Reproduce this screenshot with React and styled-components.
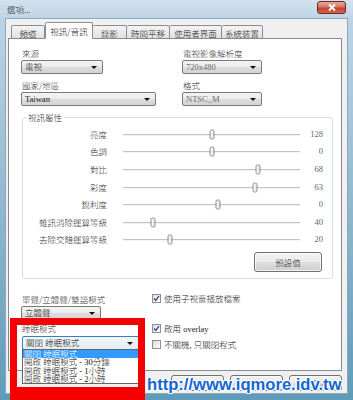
import React from "react";
import styled, { createGlobalStyle } from "styled-components";

const GlobalStyle = createGlobalStyle`
  html, body {
    margin: 0;
    padding: 0;
  }
  body {
    width: 353px;
    height: 400px;
    overflow: hidden;
    font-family: "Liberation Serif", "Noto Sans CJK TC", serif;
    font-size: 8.5px;
    font-weight: 300;
    color: #1b1b1b;
  }
`;

const Window = styled.div`
  position: relative;
  width: 353px;
  height: 400px;
  box-sizing: border-box;
  display: flex;
  flex-direction: column;
  padding: 0 6px 7px;
  overflow: hidden;
  background: linear-gradient(180deg, #d3e3ef 0px, #bdd4e5 19px, #92b9d0 200px, #5e9bb8 400px);
`;

const TitleBar = styled.div`
  height: 19px;
  display: flex;
  align-items: flex-start;
  justify-content: space-between;
`;

const Title = styled.span`
  margin: 4px 0 0 1px;
  line-height: 10px;
  font-family: "Noto Sans CJK TC", sans-serif;
  font-size: 8.5px;
  color: #222;
`;

const CloseButton = styled.div`
  width: 29px;
  height: 13px;
  margin: 1px 1px 0 0;
  box-sizing: border-box;
  border: 1px solid #6d2a22;
  border-radius: 3px;
  background: linear-gradient(180deg, #e9a99a 0%, #d47463 48%, #c2402c 52%, #d5644d 100%);
  display: flex;
  align-items: center;
  justify-content: center;
`;

const Client = styled.div`
  flex: 1;
  display: flex;
  flex-direction: column;
  padding: 3px 5px 2px 2px;
  background: #f0f0f0;
  box-shadow: 0 0 0 1px #8aa9be;
`;

const TabStrip = styled.div`
  height: 17px;
  display: flex;
  align-items: flex-end;
  padding-left: 3px;
  margin-bottom: -1px;
  position: relative;
  z-index: 1;
`;

const Tab = styled.div`
  width: ${(p) => p.$w}px;
  height: ${(p) => (p.$active ? 17 : 14)}px;
  box-sizing: border-box;
  display: flex;
  align-items: center;
  justify-content: center;
  border: 1px solid #898c95;
  border-left-width: ${(p) => (p.$first || p.$active ? 1 : 0)}px;
  border-bottom-color: ${(p) => (p.$active ? "#fff" : "#898c95")};
  border-radius: 2px 2px 0 0;
  background: ${(p) => (p.$active ? "#fff" : "linear-gradient(180deg, #f4f4f4, #e1e1e1)")};
  font-family: "Noto Sans CJK TC", sans-serif;
  font-size: 8.5px;
  line-height: 10px;
  padding-top: ${(p) => (p.$active ? 0 : 1)}px;
`;

const Panel = styled.div`
  flex: 1;
  background: #fff;
  border: 1px solid #898c95;
  padding: 8px 8px 0 12px;
  display: flex;
  flex-direction: column;
`;

const TopGrid = styled.div`
  display: grid;
  grid-template-columns: 161px 1fr;
`;

const Column = styled.div`
  display: flex;
  flex-direction: column;
`;

const Label = styled.div`
  height: 12px;
  line-height: 12px;
  margin-top: ${(p) => p.$mt || 0}px;
  margin-bottom: ${(p) => (p.$mb === undefined ? 1 : p.$mb)}px;
  margin-left: 1px;
  font-family: "Noto Sans CJK TC", sans-serif;
  color: #333;
`;

const SelectBox = styled.div`
  position: relative;
  width: ${(p) => p.$w}px;
  height: 14px;
  box-sizing: border-box;
  display: flex;
  align-items: center;
  padding-left: 3px;
  border: 1px solid ${(p) => (p.$open ? "#3c7fb1" : "#7a7a7a")};
  border-radius: 2px;
  background: ${(p) =>
    p.$open
      ? "linear-gradient(180deg, #f3f7fa, #e3ecf3)"
      : "linear-gradient(180deg, #f4f4f4 0%, #ebebeb 50%, #dedede 50%, #d3d3d3 100%)"};
  color: ${(p) => (p.$dim ? "#6a6a6a" : "#111")};
  line-height: 12px;
  margin-left: ${(p) => p.$ml || 0}px;
`;

const Arrow = styled.span`
  position: absolute;
  right: 5px;
  top: 5px;
  width: 0;
  height: 0;
  border-left: 3px solid transparent;
  border-right: 3px solid transparent;
  border-top: 3px solid #111;
`;

const DropList = styled.div`
  position: absolute;
  top: 100%;
  left: -1px;
  right: -1px;
  z-index: 3;
  box-sizing: border-box;
  background: #fff;
  border: 1px solid #646464;
  display: flex;
  flex-direction: column;
`;

const DropItem = styled.div`
  height: 8.3px;
  line-height: 8.3px;
  padding-left: 1px;
  white-space: nowrap;
  font-size: 8.5px;
  background: ${(p) => (p.$hl ? "#3399ff" : "transparent")};
  color: ${(p) => (p.$hl ? "#fff" : "#111")};
`;

const GroupBox = styled.fieldset`
  margin: 6px 0 0 1px;
  padding: 3px 10px 6px 0;
  border: 1px solid #d5dfe5;
  border-radius: 3px;
  min-width: 0;
`;

const Legend = styled.legend`
  margin-left: 3px;
  padding: 0 2px;
  line-height: 10px;
  font-family: "Noto Sans CJK TC", sans-serif;
  font-size: 8.5px;
  color: #333;
`;

const SliderGrid = styled.div`
  display: grid;
  grid-template-columns: 100px 177px 23px;
  grid-auto-rows: 17.6px;
  align-items: center;
`;

const SliderLabel = styled.div`
  text-align: right;
  padding-right: 16px;
  font-family: "Noto Sans CJK TC", sans-serif;
  color: #333;
  line-height: 10px;
`;

const Track = styled.div`
  position: relative;
  height: 100%;
  &::before {
    content: "";
    position: absolute;
    left: 0;
    right: 0;
    top: 50%;
    height: 1px;
    background: #c4c4c4;
    border-bottom: 1px solid #f4f4f4;
  }
`;

const Thumb = styled.span`
  position: absolute;
  top: 50%;
  width: 5px;
  height: 10px;
  box-sizing: border-box;
  transform: translate(-50%, -45%);
  border: 1px solid #8a8a8a;
  border-radius: 2px;
  background: linear-gradient(90deg, #fdfdfd, #e4e4e4);
`;

const Value = styled.div`
  text-align: right;
  color: #666;
  line-height: 10px;
`;

const ButtonRow = styled.div`
  display: flex;
  justify-content: flex-end;
  margin-top: ${(p) => p.$mt || 0}px;
  gap: 6px;
`;

const Button = styled.div`
  width: ${(p) => p.$w}px;
  height: ${(p) => p.$h}px;
  box-sizing: border-box;
  display: flex;
  align-items: center;
  justify-content: center;
  border: 1px solid #707070;
  border-radius: 3px;
  background: linear-gradient(180deg, #f2f2f2 0%, #ebebeb 50%, #dddddd 50%, #cfcfcf 100%);
  box-shadow: inset 0 0 0 1px rgba(255, 255, 255, 0.7);
  font-family: "Noto Sans CJK TC", sans-serif;
  color: #222;
  line-height: 10px;
`;

const BottomGrid = styled.div`
  display: grid;
  grid-template-columns: 131px 1fr;
  margin-top: 14px;
`;

const CheckRow = styled.div`
  height: 12px;
  display: flex;
  align-items: center;
  gap: 3px;
  margin-top: ${(p) => p.$mt || 0}px;
  font-family: "Liberation Serif", "Noto Sans CJK TC", serif;
  color: #222;
  white-space: nowrap;
`;

const CheckBox = styled.span`
  width: 9px;
  height: 9px;
  box-sizing: border-box;
  border: 1px solid #8e8f8f;
  background: linear-gradient(135deg, #dcdcdc, #fff);
  display: flex;
  align-items: center;
  justify-content: center;
`;

const RedBox = styled.div`
  position: absolute;
  left: 10px;
  top: 318px;
  width: 135px;
  height: 82px;
  box-sizing: border-box;
  border: 7px solid #f40000;
  border-bottom-width: 13px;
  pointer-events: none;
  z-index: 4;
`;

const Watermark = styled.div`
  position: absolute;
  left: 147px;
  top: 375px;
  z-index: 5;
  font-family: "Liberation Sans", Arial, sans-serif;
  font-weight: bold;
  font-size: 16.6px;
  line-height: 20px;
  color: #1467cf;
  text-shadow: 1px 0 0 #fff, -1px 0 0 #fff, 0 1px 0 #fff, 0 -1px 0 #fff,
    1px 1px 0 #fff, -1px -1px 0 #fff, 1px -1px 0 #fff, -1px 1px 0 #fff;
`;

const tabs = [
  { t: "頻道", w: 34 },
  { t: "視訊/音訊", w: 48, active: true },
  { t: "錄影", w: 34 },
  { t: "時間平移", w: 43 },
  { t: "使用者界面", w: 52 },
  { t: "系統裝置", w: 41 },
];

const sliders = [
  { label: "亮度", pos: 89, value: 128 },
  { label: "色調", pos: 89, value: 0 },
  { label: "對比", pos: 135, value: 68 },
  { label: "彩度", pos: 132, value: 63 },
  { label: "銳利度", pos: 95, value: 0 },
  { label: "雜訊消除運算等級", pos: 30, value: 40 },
  { label: "去除交錯運算等級", pos: 47, value: 20 },
];

const sleepOptions = [
  "關閉 睡眠模式",
  "開啟 睡眠模式 - 30分鐘",
  "開啟 睡眠模式 - 1小時",
  "開啟 睡眠模式 - 2小時",
];

function Select({ w, value, dim, open, ml, children }) {
  return (
    <SelectBox $w={w} $dim={dim} $open={open} $ml={ml}>
      {value}
      <Arrow />
      {children}
    </SelectBox>
  );
}

function Check({ checked, label, mt }) {
  return (
    <CheckRow $mt={mt}>
      <CheckBox>
        {checked && (
          <svg width="7" height="7" viewBox="0 0 7 7">
            <path d="M1 3.6 L2.8 5.4 L6 1.2" fill="none" stroke="#3b4e8a" strokeWidth="1.4" />
          </svg>
        )}
      </CheckBox>
      {label}
    </CheckRow>
  );
}

export default function App() {
  return (
    <>
      <GlobalStyle />
      <Window>
        <TitleBar>
          <Title>選項...</Title>
          <CloseButton>
            <svg width="8" height="7" viewBox="0 0 8 7">
              <path d="M1 0.5 L7 6.5 M7 0.5 L1 6.5" stroke="#fff" strokeWidth="1.8" />
            </svg>
          </CloseButton>
        </TitleBar>
        <Client>
          <TabStrip>
            {tabs.map((tab, i) => (
              <Tab key={tab.t} $w={tab.w} $active={tab.active} $first={i === 0}>
                {tab.t}
              </Tab>
            ))}
          </TabStrip>
          <Panel>
            <TopGrid>
              <Column>
                <Label>來源</Label>
                <Select w={82} value="電視" />
                <Label $mt={5}>國家/地區</Label>
                <Select w={135} value="Taiwan" />
              </Column>
              <Column>
                <Label>電視影像解析度</Label>
                <Select w={80} value="720x480" dim />
                <Label $mt={5}>格式</Label>
                <Select w={80} value="NTSC_M" dim />
              </Column>
            </TopGrid>

            <GroupBox>
              <Legend>視訊屬性</Legend>
              <SliderGrid>
                {sliders.map((s) => (
                  <React.Fragment key={s.label}>
                    <SliderLabel>{s.label}</SliderLabel>
                    <Track>
                      <Thumb style={{ left: s.pos }} />
                    </Track>
                    <Value>{s.value}</Value>
                  </React.Fragment>
                ))}
              </SliderGrid>
              <ButtonRow $mt={4}>
                <Button $w={68} $h={20}>預設值</Button>
              </ButtonRow>
            </GroupBox>

            <BottomGrid>
              <Column>
                <Label>單聲/立體聲/雙語模式</Label>
                <Select w={80} value="立體聲" />
                <Label $mt={2} $mb={2}>睡眠模式</Label>
                <Select w={117} value="關閉 睡眠模式" open ml={1}>
                  <DropList>
                    {sleepOptions.map((o, i) => (
                      <DropItem key={o} $hl={i === 0}>
                        {o}
                      </DropItem>
                    ))}
                  </DropList>
                </Select>
              </Column>
              <Column>
                <Check checked label="使用子視窗播放檔案" mt={-1} />
                <Check checked label="啟用 overlay" mt={18} />
                <Check label="不關機, 只關閉程式" mt={4} />
              </Column>
            </BottomGrid>
          </Panel>
          <ButtonRow $mt={4}>
            <Button $w={53} $h={16}>確定</Button>
            <Button $w={53} $h={16}>取消</Button>
            <Button $w={53} $h={16}>套用(A)</Button>
          </ButtonRow>
        </Client>
        <RedBox />
        <Watermark>http://www.iqmore.idv.tw</Watermark>
      </Window>
    </>
  );
}
